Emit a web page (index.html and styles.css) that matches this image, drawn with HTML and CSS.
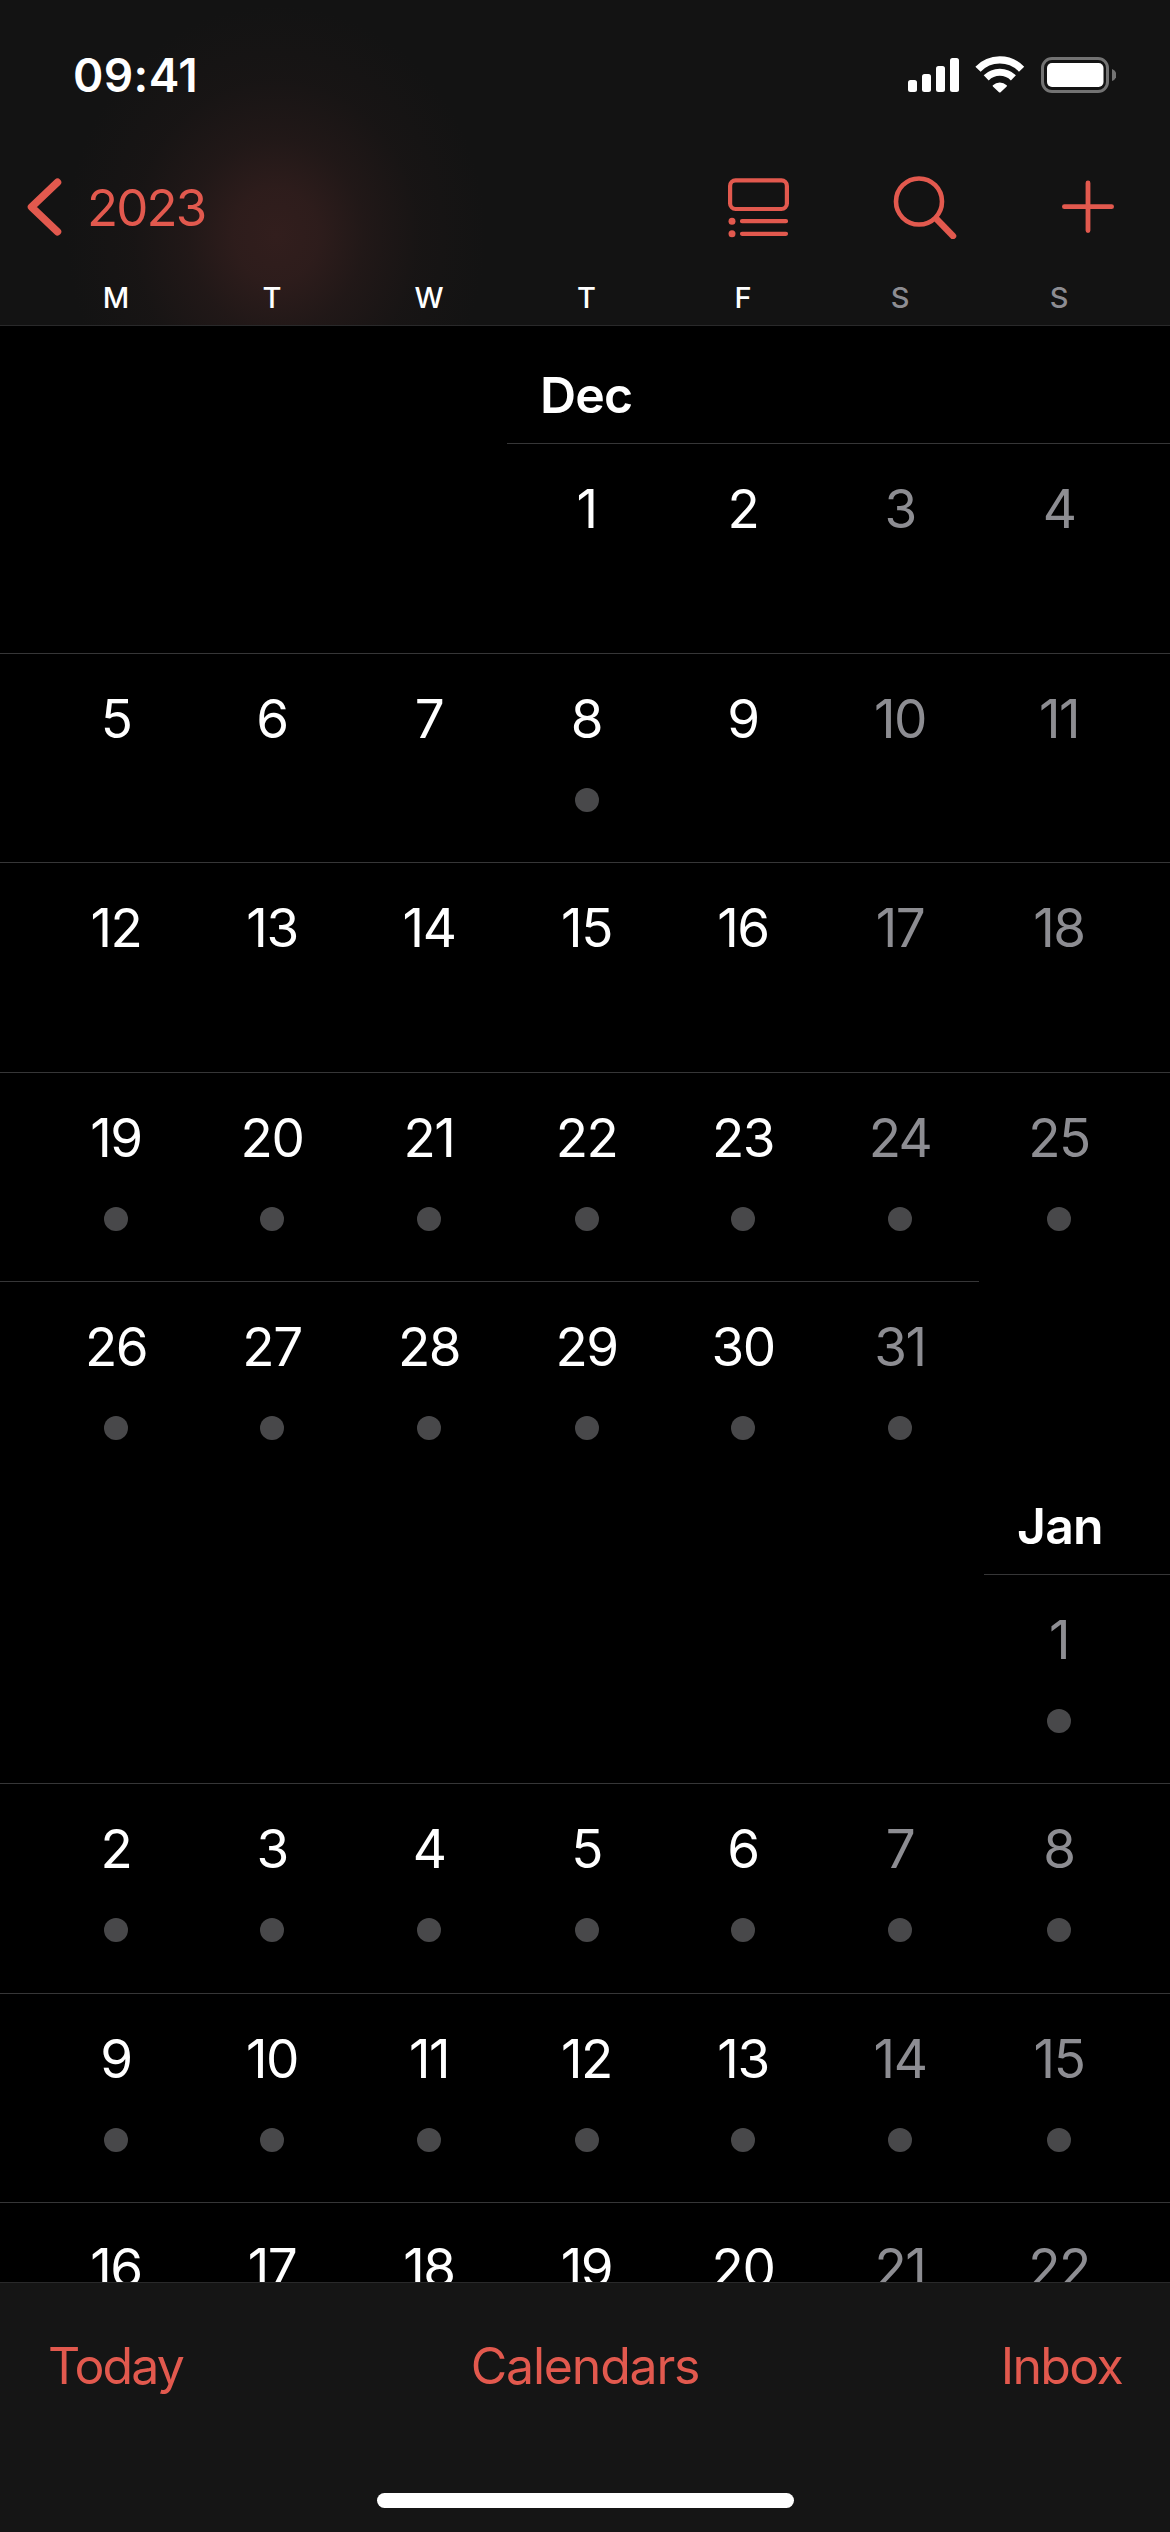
FILE: index.html
```html
<!DOCTYPE html>
<html lang="en">
<head>
    <meta charset="UTF-8">
    <meta name="viewport" content="width=device-width, initial-scale=1.0">
    <title>Calendar</title>
    <link rel="stylesheet" href="styles.css">
</head>
<body>
    <div class="phone">
        <header class="header">
            <div class="status-bar">
                <span class="time">09:41</span>
                <svg class="status-icons" width="210" height="40" viewBox="0 0 210 40">
                    <!-- Signal -->
                    <g fill="#fff">
                        <rect x="2" y="25" width="9" height="12" rx="2.5"/>
                        <rect x="16" y="19" width="9" height="18" rx="2.5"/>
                        <rect x="30" y="11" width="9" height="26" rx="2.5"/>
                        <rect x="44" y="3" width="9" height="34" rx="2.5"/>
                    </g>
                    <!-- Wi-Fi -->
                    <g fill="none" stroke="#fff" stroke-width="7.2">
                        <path d="M72 14.3a30 30 0 0 1 43.6 0"/>
                        <path d="M80.2 22.8a19.5 19.5 0 0 1 27.2 0"/>
                    </g>
                    <path d="M86.9 30.2a10.5 10.5 0 0 1 13.8 0q.6.6 0 1.2l-6.1 5.8q-.8.7-1.6 0l-6.1-5.8q-.6-.6 0-1.2z" fill="#fff"/>
                    <!-- Battery -->
                    <rect x="136.5" y="3.5" width="65" height="33" rx="9.5" fill="none" stroke="#737373" stroke-width="3"/>
                    <rect x="141" y="8" width="56.5" height="24" rx="5" fill="#fff"/>
                    <path d="M206 14q4.5 2 4.500 6t-4.500 6z" fill="#737373"/>
                </svg>
            </div>
            <nav class="nav">
                <a class="back">
                    <svg width="40" height="64" viewBox="0 0 40 64">
                        <path d="M33.500 7.300L7.500 32l26 24.700" fill="none" stroke="currentColor" stroke-width="7.500" stroke-linecap="round" stroke-linejoin="round"/>
                    </svg>
                    <span class="year">2023</span>
                </a>
                <div class="actions">
                    <svg width="64" height="64" viewBox="0 0 64 64" fill="none" stroke="currentColor" stroke-width="4.200" stroke-linecap="round">
                        <rect x="4.100" y="5.400" width="56.800" height="28.600" rx="5.500"/>
                        <path d="M16 46.200h44M16 58.800h44"/>
                        <g fill="currentColor" stroke="none">
                            <circle cx="6" cy="46.200" r="3.500"/>
                            <circle cx="6" cy="58.800" r="3.500"/>
                        </g>
                    </svg>
                    <svg width="68" height="64" viewBox="0 0 68 64" fill="none" stroke="currentColor" stroke-linecap="round">
                        <circle cx="28" cy="26.500" r="23" stroke-width="4.600"/>
                        <path d="M46 44.500l16 16.500" stroke-width="6.500"/>
                    </svg>
                    <svg width="56" height="64" viewBox="0 0 56 64" fill="none" stroke="currentColor" stroke-width="4.800" stroke-linecap="round">
                        <path d="M28 8v47.500M4.400 31.700h47.200"/>
                    </svg>
                </div>
            </nav>
            <div class="weekdays">
                <span>M</span>
                <span>T</span>
                <span>W</span>
                <span>T</span>
                <span>F</span>
                <span class="weekend">S</span>
                <span class="weekend">S</span>
            </div>
        </header>

        <main class="calendar">
            <!-- December -->
            <div class="month dec"><h2>Dec</h2></div>
            <div class="line from-thu"></div>
            <div class="week">
                <div class="day"></div>
                <div class="day"></div>
                <div class="day"></div>
                <div class="day">1</div>
                <div class="day">2</div>
                <div class="day weekend">3</div>
                <div class="day weekend">4</div>
            </div>
            <div class="line"></div>
            <div class="week">
                <div class="day">5</div>
                <div class="day">6</div>
                <div class="day">7</div>
                <div class="day event">8</div>
                <div class="day">9</div>
                <div class="day weekend">10</div>
                <div class="day weekend">11</div>
            </div>
            <div class="line"></div>
            <div class="week">
                <div class="day">12</div>
                <div class="day">13</div>
                <div class="day">14</div>
                <div class="day">15</div>
                <div class="day">16</div>
                <div class="day weekend">17</div>
                <div class="day weekend">18</div>
            </div>
            <div class="line"></div>
            <div class="week">
                <div class="day event">19</div>
                <div class="day event">20</div>
                <div class="day event">21</div>
                <div class="day event">22</div>
                <div class="day event">23</div>
                <div class="day weekend event">24</div>
                <div class="day weekend event">25</div>
            </div>
            <div class="line to-sat"></div>
            <div class="week">
                <div class="day event">26</div>
                <div class="day event">27</div>
                <div class="day event">28</div>
                <div class="day event">29</div>
                <div class="day event">30</div>
                <div class="day weekend event">31</div>
                <div class="day"></div>
            </div>

            <!-- January -->
            <div class="month jan"><h2>Jan</h2></div>
            <div class="line from-sun"></div>
            <div class="week">
                <div class="day"></div>
                <div class="day"></div>
                <div class="day"></div>
                <div class="day"></div>
                <div class="day"></div>
                <div class="day"></div>
                <div class="day weekend event">1</div>
            </div>
            <div class="line"></div>
            <div class="week">
                <div class="day event">2</div>
                <div class="day event">3</div>
                <div class="day event">4</div>
                <div class="day event">5</div>
                <div class="day event">6</div>
                <div class="day weekend event">7</div>
                <div class="day weekend event">8</div>
            </div>
            <div class="line"></div>
            <div class="week">
                <div class="day event">9</div>
                <div class="day event">10</div>
                <div class="day event">11</div>
                <div class="day event">12</div>
                <div class="day event">13</div>
                <div class="day weekend event">14</div>
                <div class="day weekend event">15</div>
            </div>
            <div class="line"></div>
            <div class="week">
                <div class="day">16</div>
                <div class="day">17</div>
                <div class="day">18</div>
                <div class="day">19</div>
                <div class="day">20</div>
                <div class="day weekend">21</div>
                <div class="day weekend">22</div>
            </div>
        </main>

        <footer class="footer">
            <div class="toolbar">
                <a class="today">Today</a>
                <a>Calendars</a>
                <a class="inbox">Inbox</a>
            </div>
            <div class="home-indicator"></div>
        </footer>
    </div>
</body>
</html>
```
FILE: styles.css
```css
* {
    margin: 0;
    padding: 0;
    box-sizing: border-box;
}

body {
    background-color: #000;
    color: #fff;
    font-family: Inter, "Liberation Sans", sans-serif;
}

svg {
    display: block;
}

.phone {
    width: 1170px;
    height: 2532px;
    display: flex;
    flex-direction: column;
    overflow: hidden;
}

/* Header */
.header {
    height: 326px;
    flex-shrink: 0;
    background-color: #131313;
    background-image: radial-gradient(ellipse 210px 230px at 276px 235px, rgba(50, 30, 29, 1), rgba(50, 30, 29, 0.85) 20%, rgba(50, 30, 29, 0.45) 42%, rgba(50, 30, 29, 0.15) 68%, rgba(50, 30, 29, 0));
    border-bottom: 1px solid #29292a;
}

.status-bar {
    height: 149px;
    padding: 0 54px 0 73px;
    display: flex;
    justify-content: space-between;
    align-items: center;
}

.time {
    font-size: 46px;
    font-weight: 600;
    letter-spacing: 0.4px;
}

.nav {
    height: 116px;
    padding: 0 54px 0 24px;
    display: flex;
    justify-content: space-between;
    align-items: center;
    color: #e2594e;
}

.back {
    display: flex;
    align-items: center;
    gap: 23px;
}

.year {
    font-size: 51px;
    letter-spacing: -1.9px;
}

.actions {
    display: flex;
    gap: 101px;
}

.weekdays,
.week {
    display: grid;
    grid-template-columns: 156px 156px 158px 157px 156px 158px 160px;
    padding-left: 38px;
    text-align: center;
}

.weekdays {
    padding-top: 12px;
    font-size: 29px;
    font-weight: 550;
    line-height: 41px;
}

.weekend {
    color: #8d8d92;
}

/* Calendar */
.calendar {
    height: 1956px;
    flex-shrink: 0;
    overflow: hidden;
}

.month h2 {
    font-size: 50px;
    font-weight: 600;
    line-height: 60px;
    letter-spacing: -0.8px;
}

.dec {
    height: 117.25px;
    padding: 39px 0 0 540px;
}

.jan {
    height: 83px;
    padding: 5px 0 0 1017px;
}

.line {
    height: 1px;
    background-color: #363637;
}

.from-thu {
    margin-left: 507px;
}

.from-sun {
    margin-left: 984px;
}

.to-sat {
    width: 979px;
}

.week {
    height: 208.5px;
}

.day {
    padding-top: 34px;
    font-size: 53px;
    line-height: 62px;
    letter-spacing: -1.5px;
}

.event::after {
    content: "";
    display: block;
    width: 24px;
    height: 24px;
    margin: 38px auto 0;
    border-radius: 50%;
    background-color: #48484a;
}

/* Footer */
.footer {
    flex: 1;
    border-top: 1px solid #29292a;
    background-color: #151515;
}

.toolbar {
    height: 165px;
    padding: 0 48px;
    display: grid;
    grid-template-columns: 1fr auto 1fr;
    align-items: center;
    color: #e2594e;
    font-size: 50px;
    letter-spacing: -1.2px;
}

.today {
    letter-spacing: -1.9px;
}

.inbox {
    text-align: right;
    letter-spacing: -1.7px;
}

.home-indicator {
    width: 417px;
    height: 15px;
    margin: 45px auto 0;
    border-radius: 8px;
    background-color: #fff;
}
```
